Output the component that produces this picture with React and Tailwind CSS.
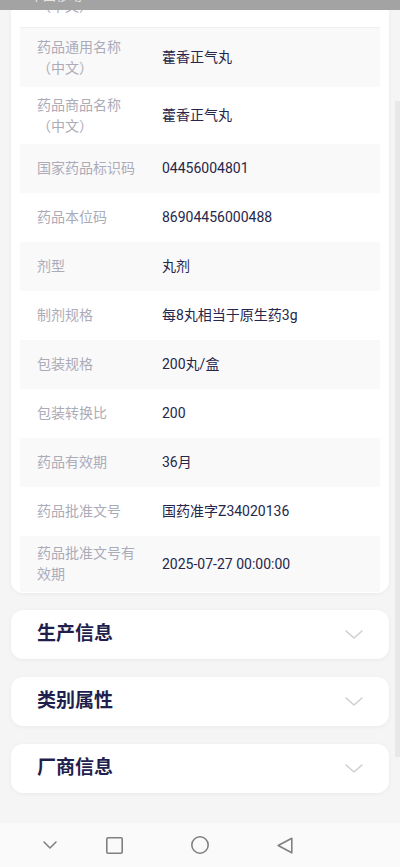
import React from 'react';

// ── Drug detail rows (first card, scrolled) ─────────────────────────────────
const rows = [
  { label: '药品通用名称（中文）', value: '藿香正气丸', h: 'h-[59px]' },
  { label: '药品商品名称（中文）', value: '藿香正气丸', h: 'h-[57px]' },
  { label: '国家药品标识码', value: '04456004801', h: 'h-[49px]' },
  { label: '药品本位码', value: '86904456000488', h: 'h-[49px]' },
  { label: '剂型', value: '丸剂', h: 'h-[49px]' },
  { label: '制剂规格', value: '每8丸相当于原生药3g', h: 'h-[49px]' },
  { label: '包装规格', value: '200丸/盒', h: 'h-[49px]' },
  { label: '包装转换比', value: '200', h: 'h-[49px]' },
  { label: '药品有效期', value: '36月', h: 'h-[49px]' },
  { label: '药品批准文号', value: '国药准字Z34020136', h: 'h-[49px]' },
  { label: '药品批准文号有效期', value: '2025-07-27 00:00:00', h: 'h-[56px]' },
];

const sections = ['生产信息', '类别属性', '厂商信息'];

const Chevron = () => (
  <svg width="18" height="9" viewBox="0 0 18 9" fill="none">
    <polyline points="1,1 9,8 17,1" stroke="#cdcdcd" strokeWidth="1.4" strokeLinejoin="round" strokeLinecap="round" />
  </svg>
);

const App = () => {
  return (
    <div className="relative w-[400px] h-[867px] overflow-hidden bg-[#f5f5f5] flex flex-col font-['Roboto','Noto_Sans_CJK_SC',sans-serif]">
      {/* Status bar (cut off at the top of the screen) */}
      <div className="absolute top-0 left-0 right-0 h-[10px] bg-[#a3a3a3] z-10 overflow-hidden">
        <div className="flex items-start justify-between pl-[30px] pr-[60px] -mt-[12px] text-[#e6e6e6] text-[13px] leading-[16px]">
          <span>中国移动</span>
          <span>4G</span>
        </div>
      </div>

      {/* Scrollbar */}
      <div className="absolute right-0 top-[101px] w-[5px] h-[656px] bg-[#e8e8e8] z-10" />

      <div className="flex flex-col gap-[17px] px-[11px]">
        {/* Basic info card, scrolled so its first row sits under the status bar */}
        <div className="-mt-[20px] rounded-xl bg-white shadow-[0_1px_4px_rgba(0,0,0,0.05)] pb-[1px]">
          <div className="h-[48px] flex items-center pl-[17px] border-b border-[#eeeeee] mx-[9px]">
            <span className="text-[14px] leading-[21px] text-[#acabb8] pt-[6px]">（中文）</span>
          </div>
          <div className="mx-[9px]">
            {rows.map((r, i) => (
              <div
                key={r.label}
                className={`flex items-center ${r.h} ${i % 2 === 0 ? 'bg-[#f9f9fa]' : 'bg-white'}`}
              >
                <div className="w-[142px] shrink-0 pl-[17px] pr-[22px] text-[14px] leading-[21px] text-[#acabb8]">
                  {r.label}
                </div>
                <div className="flex-1 text-[14px] leading-[21px] text-[#26264a]">{r.value}</div>
              </div>
            ))}
          </div>
        </div>

        {/* Collapsed sections */}
        {sections.map((s, i) => (
          <div
            key={s}
            className={`h-[49px] rounded-xl bg-white shadow-[0_1px_4px_rgba(0,0,0,0.05)] flex items-center justify-between pl-[26px] pr-[26px] ${i > 0 ? 'mt-[1px]' : ''}`}
          >
            <span className="text-[19px] font-bold text-[#1f1f4d]">{s}</span>
            <Chevron />
          </div>
        ))}
      </div>

      {/* Android nav bar */}
      <div className="mt-auto h-[44px] bg-[#fafafa] flex items-center pl-[43px]">
        <svg width="14" height="8" viewBox="0 0 14 8" fill="none">
          <polyline points="1,1 7,7 13,1" stroke="#808080" strokeWidth="1.5" strokeLinecap="round" strokeLinejoin="round" />
        </svg>
        <svg className="ml-[49px]" width="17" height="17" viewBox="0 0 17 17" fill="none">
          <rect x="0.8" y="0.8" width="15.4" height="15.4" rx="1.2" stroke="#808080" strokeWidth="1.6" />
        </svg>
        <svg className="ml-[68px]" width="18" height="18" viewBox="0 0 18 18" fill="none">
          <circle cx="9" cy="9" r="8.2" stroke="#808080" strokeWidth="1.6" />
        </svg>
        <svg className="ml-[68px]" width="16" height="17" viewBox="0 0 16 17" fill="none">
          <path d="M14.8 1.2 L1.2 8.5 L14.8 15.8 Z" stroke="#808080" strokeWidth="1.6" strokeLinejoin="round" />
        </svg>
      </div>
    </div>
  );
};

export default App;
